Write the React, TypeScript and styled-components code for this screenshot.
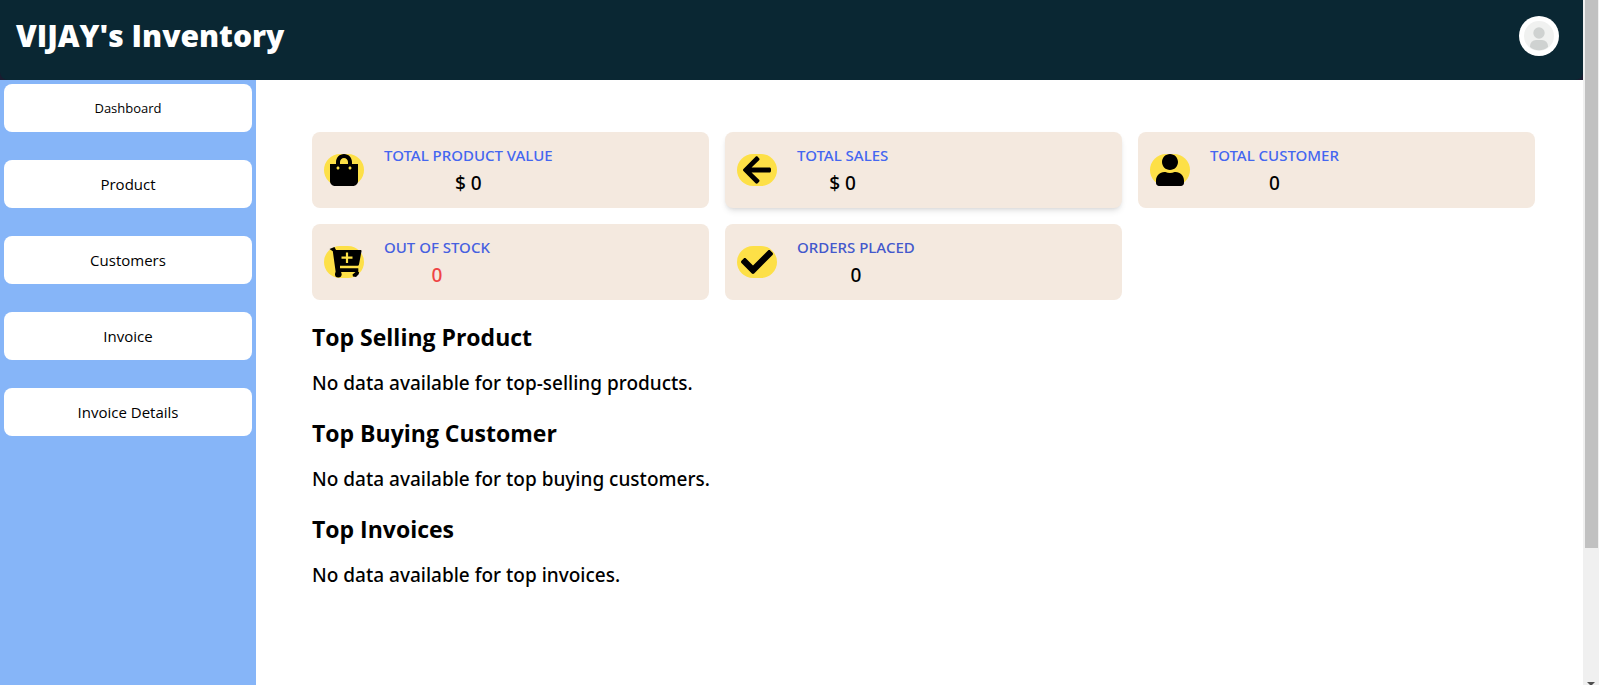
import React from 'react';
import styled, { createGlobalStyle } from 'styled-components';
import { FaArrowLeft, FaCheck, FaShoppingBag, FaUser } from 'react-icons/fa';

const GlobalStyle = createGlobalStyle`
  *, *::before, *::after { box-sizing: border-box; }
  body {
    margin: 0;
    background: #fff;
    color: #000;
    font-family: 'Segoe UI', 'Noto Sans', 'Open Sans', sans-serif;
  }
  h1, h2, h3, p, ul { margin: 0; padding: 0; }
`;

const Window = styled.div`
  display: flex;
  height: 100vh;
  overflow: hidden;
`;

const Page = styled.div`
  flex: 1;
  min-width: 0;
  display: flex;
  flex-direction: column;
`;

const HeaderBar = styled.header`
  flex: none;
  background: #1a1c30;
`;

const HeaderInner = styled.div`
  display: flex;
  align-items: center;
  justify-content: space-between;
  height: 80px;
  padding: 0 24px 8px 16px;
  background: #0a2733;
  border-radius: 0 0 8px 8px;
`;

const Brand = styled.h1`
  color: #fff;
  font-family: 'Segoe UI', 'Open Sans', sans-serif;
  font-size: 30px;
  line-height: 36px;
  font-weight: 800;
`;

const Avatar = styled.button`
  display: grid;
  place-items: center;
  width: 40px;
  height: 40px;
  padding: 0;
  border: 0;
  border-radius: 50%;
  background: #fff;
  cursor: pointer;
`;

const Body = styled.div`
  flex: 1;
  min-height: 0;
  display: flex;
`;

const Sidebar = styled.nav`
  flex: none;
  width: 256px;
  padding: 4px;
  background: #86b5f8;
  font-family: 'Segoe UI', 'Open Sans', sans-serif;
`;

const Menu = styled.ul`
  display: flex;
  flex-direction: column;
  gap: 28px;
  list-style: none;
`;

const MenuLink = styled.a<{ $small?: boolean }>`
  display: flex;
  align-items: center;
  justify-content: center;
  height: 48px;
  border-radius: 8px;
  background: #fff;
  color: #000;
  font-size: ${(p) => (p.$small ? 13 : 15)}px;
  line-height: 24px;
  font-weight: 400;
  text-decoration: none;
`;

const Main = styled.main`
  flex: 1;
  min-width: 0;
  padding: 52px 48px 0 56px;
`;

const Cards = styled.section`
  display: grid;
  grid-template-columns: repeat(3, minmax(0, 1fr));
  gap: 16px;
`;

const Card = styled.article<{ $raised?: boolean }>`
  display: flex;
  align-items: center;
  gap: 20px;
  height: 76px;
  padding: 0 12px;
  border-radius: 8px;
  background: #f4e9df;
  box-shadow: ${(p) => (p.$raised ? '0 4px 6px -1px rgba(0,0,0,.1), 0 2px 4px -2px rgba(0,0,0,.1)' : 'none')};
`;

const IconPill = styled.span`
  display: grid;
  place-items: center;
  width: 40px;
  height: 32px;
  border-radius: 16px;
  background: #fde047;
  font-size: 32px;
`;

const Stat = styled.div`
  display: flex;
  flex-direction: column;
  gap: 2px;
  text-align: center;
`;

const StatTitle = styled.h3<{ $color: string }>`
  color: ${(p) => p.$color};
  font-size: 15px;
  line-height: 24px;
  font-weight: 500;
`;

const StatValue = styled.p<{ $alert?: boolean }>`
  color: ${(p) => (p.$alert ? '#ef4444' : '#000')};
  font-size: 19px;
  line-height: 28px;
  font-weight: 500;
`;

const Report = styled.section`
  padding-top: 20px;
`;

const ReportTitle = styled.h2`
  font-family: 'Segoe UI', 'Open Sans', sans-serif;
  font-size: 23px;
  line-height: 34px;
  font-weight: 700;
`;

const ReportText = styled.p`
  margin-top: 16px;
  font-size: 19px;
  line-height: 26px;
  font-weight: 500;
`;

const ScrollTrack = styled.div`
  flex: none;
  display: flex;
  flex-direction: column;
  justify-content: space-between;
  align-items: center;
  width: 16px;
  background: #f0f0f0;
  overflow: hidden;
`;

const ScrollThumb = styled.div`
  width: 13px;
  height: 80%;
  background: #c1c1c1;
`;

function CartIcon() {
  return (
    <svg width="36" height="32" viewBox="0 0 36 32" aria-hidden="true">
      <path d="M3.500 3 8.500 1l1.500 3h24.500a1 1 0 0 1 1 1.200L33 18.500a1.500 1.500 0 0 1-1.500 1.200H14v2.600h18.300V26H9.700L6.800 5.200z" />
      <path d="M21 6.500v10.500M15.500 11.700h11" fill="none" stroke="#fde047" strokeWidth="2.200" />
      <circle cx="12.300" cy="28.300" r="3.300" />
      <path d="M26.500 28.500 29.500 26h3.500l-.3 2.300-2.700 2.700-3-.4z" />
    </svg>
  );
}

function ProfileIcon() {
  return (
    <svg width="30" height="30" viewBox="0 0 30 30" aria-hidden="true">
      <circle cx="15" cy="15" r="15" fill="#f0f1f0" />
      <circle cx="15" cy="12" r="5.700" fill="#cfd2d1" />
      <path d="M6 26v-1a6 6 0 0 1 6-6h6a6 6 0 0 1 6 6v1a14 14 0 0 1-18 0z" fill="#cfd2d1" />
    </svg>
  );
}

const links = ['Dashboard', 'Product', 'Customers', 'Invoice', 'Invoice Details'];

const stats = [
  { title: 'TOTAL PRODUCT VALUE', value: '$ 0', icon: <FaShoppingBag />, color: '#4466f0' },
  { title: 'TOTAL SALES', value: '$ 0', icon: <FaArrowLeft />, color: '#4466f0', raised: true },
  { title: 'TOTAL CUSTOMER', value: '0', icon: <FaUser />, color: '#4466f0' },
  { title: 'OUT OF STOCK', value: '0', icon: <CartIcon />, color: '#4660e0', alert: true },
  { title: 'ORDERS PLACED', value: '0', icon: <FaCheck />, color: '#4358cc' },
];

const reports = [
  { title: 'Top Selling Product', text: 'No data available for top-selling products.' },
  { title: 'Top Buying Customer', text: 'No data available for top buying customers.' },
  { title: 'Top Invoices', text: 'No data available for top invoices.' },
];

export default function App() {
  return (
    <>
      <GlobalStyle />
      <Window>
        <Page>
          <HeaderBar>
            <HeaderInner>
              <Brand>VIJAY's Inventory</Brand>
              <Avatar type="button" aria-label="Profile">
                <ProfileIcon />
              </Avatar>
            </HeaderInner>
          </HeaderBar>
          <Body>
            <Sidebar>
              <Menu>
                {links.map((label, i) => (
                  <li key={label}>
                    <MenuLink href="#" $small={i === 0}>{label}</MenuLink>
                  </li>
                ))}
              </Menu>
            </Sidebar>
            <Main>
              <Cards>
                {stats.map((s) => (
                  <Card key={s.title} $raised={s.raised}>
                    <IconPill>{s.icon}</IconPill>
                    <Stat>
                      <StatTitle $color={s.color}>{s.title}</StatTitle>
                      <StatValue $alert={s.alert}>{s.value}</StatValue>
                    </Stat>
                  </Card>
                ))}
              </Cards>
              {reports.map((r) => (
                <Report key={r.title}>
                  <ReportTitle>{r.title}</ReportTitle>
                  <ReportText>{r.text}</ReportText>
                </Report>
              ))}
            </Main>
          </Body>
        </Page>
        <ScrollTrack aria-hidden="true">
          <ScrollThumb />
          <svg width="8" height="3" viewBox="0 0 8 3">
            <path d="M0 0h8L5 3H3z" fill="#505050" />
          </svg>
        </ScrollTrack>
      </Window>
    </>
  );
}
